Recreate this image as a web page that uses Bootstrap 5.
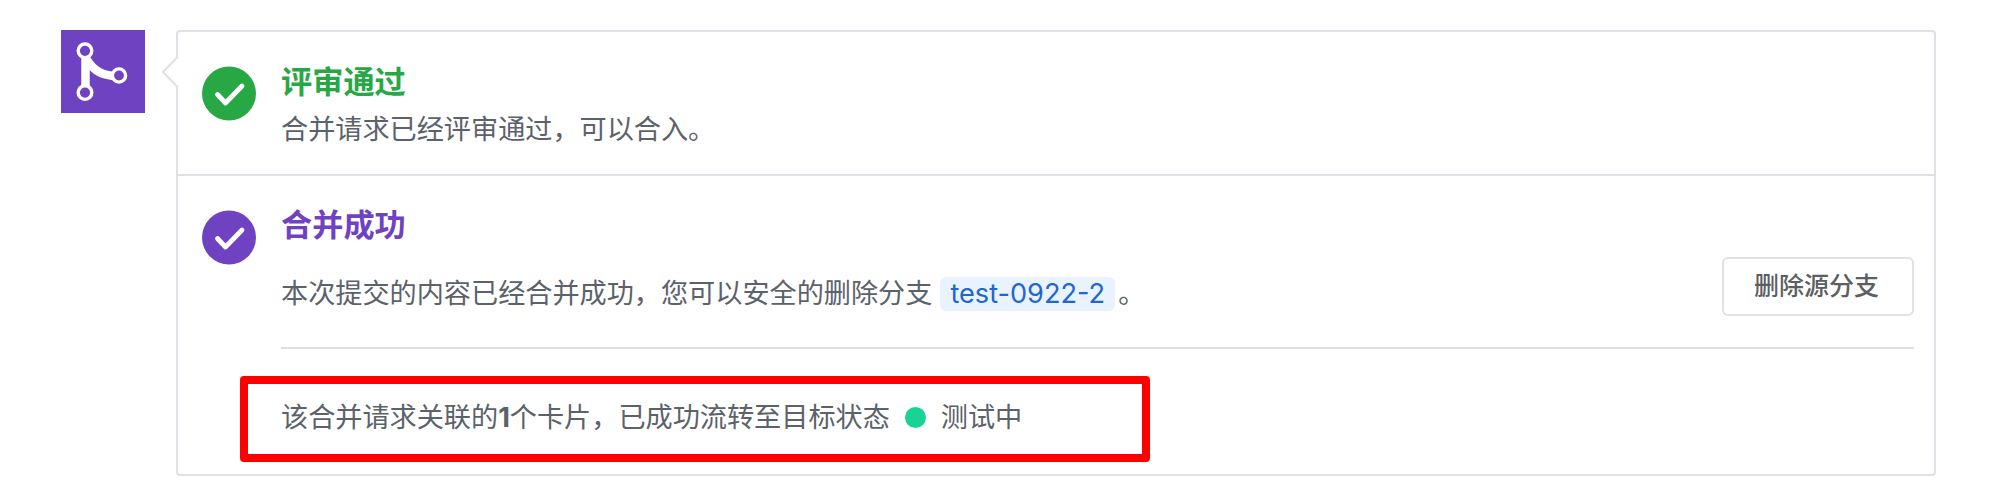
<!DOCTYPE html>
<html lang="zh-CN">
<head>
<meta charset="utf-8">
<meta name="viewport" content="width=device-width, initial-scale=1">
<title>合并请求</title>
<link rel="stylesheet" href="https://cdn.jsdelivr.net/npm/bootstrap@5.3.0/dist/css/bootstrap.min.css">
<style>
body{font-family:Inter,"Noto Sans CJK SC",sans-serif;font-size:27.15px;line-height:40px;color:#5b626b;background:#fff}
.timeline{padding:30px 57px 0 61px}
.state-icon{width:84px;height:83px;background:#6f42c1}
.merge-box{margin-left:31px;height:446px;border:2px solid #dfe1e6;border-radius:4px}
.box-arrow{left:-17px;top:23px}
.review{height:144px;padding:27px 20px 0 24px;border-bottom:2px solid #dfe1e6}
.review .status-icon{margin-top:7px}
.review p{padding-top:5px}
.merged{padding:26px 20px 0 24px}
.status-icon{width:54px;height:55px;margin-top:8px}
.status-body{margin-left:25px}
.status-title{font-size:31.2px;font-weight:700;line-height:46px;margin:0}
.ok{color:#28a745}
.done{color:#6f42c1}
.merge-note{padding-top:26px}
.branch{background:#e9f3ff;color:#1f66cf;border-radius:6px;height:34px;line-height:34px;padding:0 10px;margin:0 3px 0 8px}
.btn-delete{width:192px;height:59px;border:2px solid #dfe1e6;border-radius:6px;color:#5c5e62;font-size:25px;font-weight:500;line-height:1;padding:0 3px 0 0;margin-top:55px}
.linked{border-top:2px solid #dfe1e1;margin-top:31px;height:110px;padding-top:29px}
.state-dot{width:21px;height:21px;background:#17d394;margin:0 15px 0 15px}
.highlight{left:-41px;top:27px;width:910px;height:86px;border:8px solid #f00;border-radius:4px}
</style>
</head>
<body>
<main class="timeline d-flex align-items-start">
  <div class="state-icon flex-shrink-0">
    <svg class="d-block" width="84" height="83" viewBox="0 0 84 83" fill="none">
      <path d="M24.500 27v30" stroke="#fff" stroke-width="8.500"/>
      <path d="M21 25h7c5 9 12 15.500 23 16.500v8.500c-9-1-17-4-22.500-10z" fill="#fff"/>
      <g fill="#6f42c1" stroke="#fff" stroke-width="3.400"><circle cx="24" cy="20.800" r="6.800"/><circle cx="24" cy="62.600" r="6.800"/><circle cx="58" cy="45.500" r="6.600"/></g>
    </svg>
  </div>
  <div class="merge-box position-relative flex-grow-1">
    <svg class="box-arrow position-absolute" width="18" height="34" viewBox="0 0 18 34"><path d="M17 1.500L2 17l15 15.500" fill="#fff" stroke="#dfe1e6" stroke-width="2"/></svg>
    <section class="review d-flex align-items-start">
      <svg class="status-icon flex-shrink-0" viewBox="0 0 54 55"><circle cx="27" cy="27.500" r="27" fill="#28a745"/><path d="M15.500 28.500l8 8.500L40 20" fill="none" stroke="#fff" stroke-width="4.800" stroke-linecap="round" stroke-linejoin="round"/></svg>
      <div class="status-body">
        <h2 class="status-title ok">评审通过</h2>
        <p class="m-0">合并请求已经评审通过，可以合入。</p>
      </div>
    </section>
    <section class="merged d-flex align-items-start">
      <svg class="status-icon flex-shrink-0" viewBox="0 0 54 55"><circle cx="27" cy="27.500" r="27" fill="#6f42c1"/><path d="M15.500 28.500l8 8.500L40 20" fill="none" stroke="#fff" stroke-width="4.800" stroke-linecap="round" stroke-linejoin="round"/></svg>
      <div class="status-body flex-grow-1">
        <div class="d-flex justify-content-between align-items-start">
          <div>
            <h2 class="status-title done">合并成功</h2>
            <p class="merge-note d-flex align-items-center m-0"><span>本次提交的内容已经合并成功，您可以安全的删除分支</span><span class="branch">test-0922-2</span><span>。</span></p>
          </div>
          <button type="button" class="btn btn-delete">删除源分支</button>
        </div>
        <div class="linked position-relative d-flex align-items-center">
          <span>该合并请求关联的<b>1</b>个卡片，已成功流转至目标状态</span>
          <span class="state-dot rounded-circle"></span>
          <span>测试中</span>
          <div class="highlight position-absolute"></div>
        </div>
      </div>
    </section>
  </div>
</main>
<script src="https://cdn.jsdelivr.net/npm/bootstrap@5.3.0/dist/js/bootstrap.bundle.min.js"></script>
</body>
</html>
